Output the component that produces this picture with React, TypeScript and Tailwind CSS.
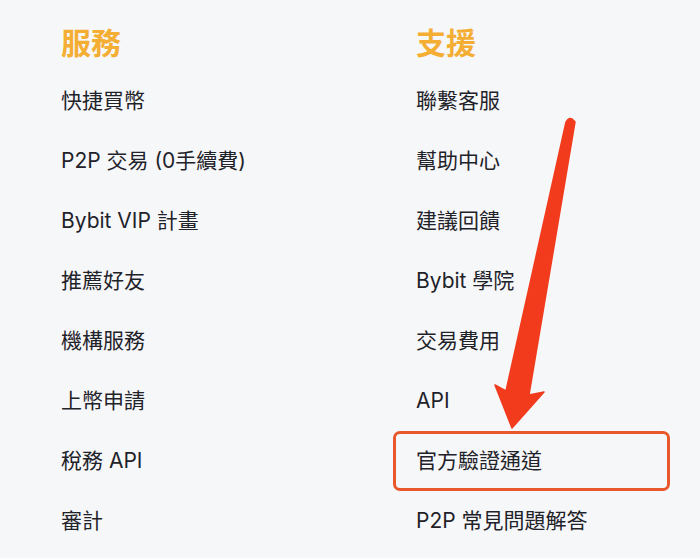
import type { ReactNode } from "react";

const services = [
  "快捷買幣",
  "P2P 交易 (0手續費)",
  "Bybit VIP 計畫",
  "推薦好友",
  "機構服務",
  "上幣申請",
  "稅務 API",
  "審計",
];

const support = [
  "聯繫客服",
  "幫助中心",
  "建議回饋",
  "Bybit 學院",
  "交易費用",
  "API",
  "官方驗證通道",
  "P2P 常見問題解答",
];

const HIGHLIGHT = "官方驗證通道";

function Column({ title, items }: { title: string; items: string[] }): ReactNode {
  return (
    <div className="flex w-[355px] shrink-0 flex-col">
      <h2 className="h-[36px] text-[30px] font-bold leading-[36px] text-[#f4ae33]">
        {title}
      </h2>
      <ul className="mt-[10px] flex flex-col">
        {items.map((item) =>
          item === HIGHLIGHT ? (
            <li
              key={item}
              className="-ml-[23px] flex h-[60px] w-[277px] items-center rounded-[7px] border-[3px] border-[#e8582a] pl-[20px] text-[21px] text-[#1f2329]"
            >
              {item}
            </li>
          ) : (
            <li
              key={item}
              className="flex h-[60px] items-center text-[21px] text-[#1f2329]"
            >
              {item}
            </li>
          ),
        )}
      </ul>
    </div>
  );
}

function Arrow(): ReactNode {
  // hand-drawn annotation pointing at the highlighted link
  return (
    <svg
      className="pointer-events-none absolute inset-0"
      width={700}
      height={558}
      viewBox="0 0 700 558"
    >
      <path
        d="M566 122 Q570 115 575 122 L529 395 L544 392 L512 428 L495 385 L506 391 Z"
        fill="#f23b1d"
        stroke="#f23b1d"
        strokeWidth={1.5}
        strokeLinejoin="round"
      />
    </svg>
  );
}

export default function App(): ReactNode {
  return (
    <div
      className="relative h-[558px] w-[700px] overflow-hidden bg-[#f6f7f9]"
      style={{ fontFamily: '"Inter", "Noto Sans CJK TC", sans-serif' }}
    >
      <div className="flex pl-[61px] pt-[25px]">
        <Column title="服務" items={services} />
        <Column title="支援" items={support} />
      </div>
      <Arrow />
    </div>
  );
}
